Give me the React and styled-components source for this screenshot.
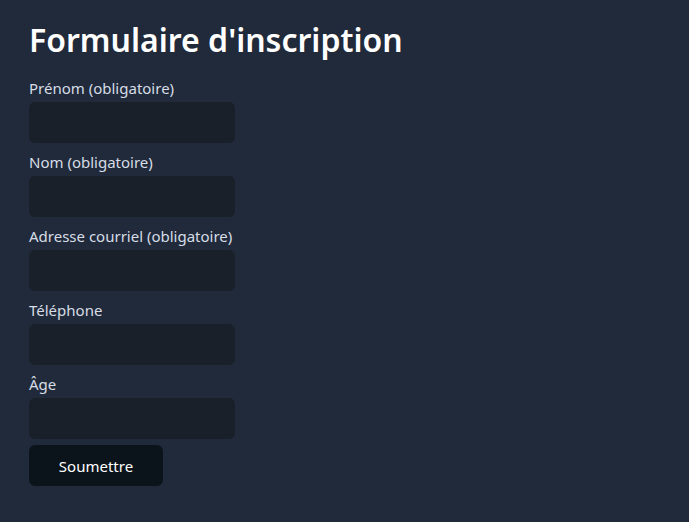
import React from "react";
import styled, { createGlobalStyle } from "styled-components";

const Global = createGlobalStyle`
  html, body {
    margin: 0;
    padding: 0;
    background: #212a3a;
  }
  body {
    font-family: "Noto Sans", "Open Sans", sans-serif;
    color: #d6dde6;
  }
`

const Page = styled.main`
  min-height: 522px;
  padding: 18px 29px;
  box-sizing: border-box;
`

const Title = styled.h1`
  font-size: 32px;
  font-weight: 600;
  color: #ffffff;
  margin: 0 0 15px;
  line-height: 44px;
`

const Form = styled.form`
  display: flex;
  flex-direction: column;
`

const Field = styled.div`
  display: flex;
  flex-direction: column;
  gap: 3px;
  margin-bottom: 8px;
`

const Label = styled.label`
  font-size: 15px;
  line-height: 22px;
  color: #d6dde6;
`

const Input = styled.input`
  width: 206px;
  height: 41px;
  box-sizing: border-box;
  border: none;
  border-radius: 6px;
  background: #19202a;
  color: #fff;
  padding: 0 10px;
  font: inherit;
  outline: none;
`

const Button = styled.button`
  width: 134px;
  height: 41px;
  margin-top: -2px;
  border: none;
  border-radius: 6px;
  background: #0c141b;
  color: #fff;
  font-family: inherit;
  font-size: 15px;
  cursor: pointer;
`

const fields = [
  { id: "prenom", label: "Prénom (obligatoire)" },
  { id: "nom", label: "Nom (obligatoire)" },
  { id: "courriel", label: "Adresse courriel (obligatoire)" },
  { id: "tel", label: "Téléphone" },
  { id: "age", label: "Âge" },
];

export default function App() {
  return (
    <Page>
      <Global />
      <Title>Formulaire d'inscription</Title>
      <Form onSubmit={(e) => e.preventDefault()}>
        {fields.map((f) => (
          <Field key={f.id}>
            <Label htmlFor={f.id}>{f.label}</Label>
            <Input id={f.id} />
          </Field>
        ))}
        <Button type="submit">Soumettre</Button>
      </Form>
    </Page>
  );
}
